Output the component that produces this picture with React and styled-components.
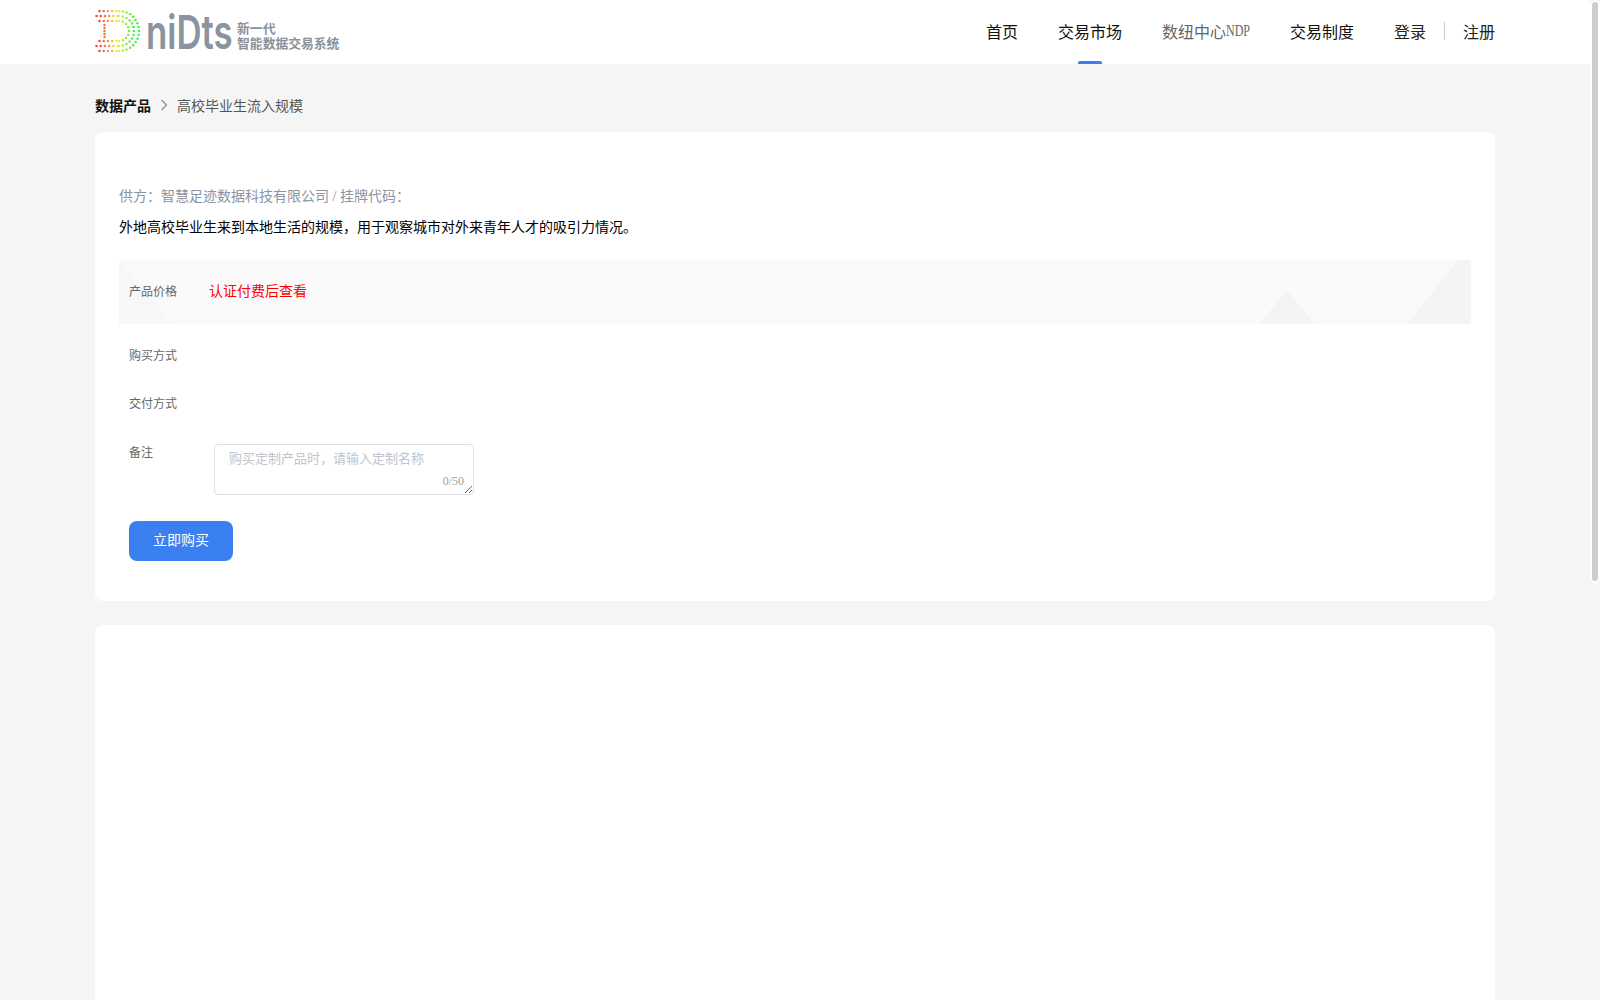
import React from "react";
import styled, { createGlobalStyle } from "styled-components";

const navItems = [
  { label: "首页" },
  { label: "交易市场", active: true },
  { label: "数纽中心", suffix: "NDP", muted: true },
  { label: "交易制度" },
];

const rings = [
  { r: 20, left: 99 },
  { r: 15, left: 96 },
  { r: 10, left: 99 },
];

function dotColor(x) {
  const hue = (345 + ((x - 95) / 45) * 155) % 360;
  return `hsl(${hue}, 85%, 60%)`;
}

function logoDots() {
  const dots = [];
  const cx = 24;
  const cy = 20;
  rings.forEach(({ r, left }) => {
    for (let x = left - 95 + 0.5; x < cx; x += 4.2) {
      dots.push([x, cy - r]);
      dots.push([x, cy + r]);
    }
    const steps = Math.round((Math.PI * r) / 4);
    for (let i = 0; i <= steps; i++) {
      const a = -Math.PI / 2 + (Math.PI * i) / steps;
      dots.push([cx + r * Math.cos(a), cy + r * Math.sin(a)]);
    }
  });
  for (let y = 14; y <= 26; y += 3) dots.push([9.5, y]);
  return dots;
}

function Logo() {
  return (
    <LogoWrap>
      <svg width="46" height="44" viewBox="0 0 46 44">
        {logoDots().map(([x, y], i) => (
          <circle key={i} cx={x} cy={y + 1} r="1.25" fill={dotColor(x + 95)} />
        ))}
      </svg>
      <LogoWord>niDts</LogoWord>
      <LogoText>
        <span>新一代</span>
        <span>智能数据交易系统</span>
      </LogoText>
    </LogoWrap>
  );
}

function PriceDecor() {
  return (
    <DecorSvg viewBox="0 0 1352 64" preserveAspectRatio="none">
      <polygon points="0,2 54,64 0,64" fill="#f7f7f7" />
      <polygon points="1140,64 1168,30 1196,64" fill="#f4f4f4" />
      <polygon points="1288,64 1339,0 1352,0 1352,64" fill="#f4f4f4" />
    </DecorSvg>
  );
}

export default function App() {
  return (
    <>
      <GlobalStyle />
      <Shell>
        <Page>
          <Header>
            <HeaderInner>
              <Logo />
              <Nav>
                {navItems.map((item) => (
                  <NavItem key={item.label} $active={item.active} $muted={item.muted}>
                    {item.label}
                    {item.suffix && <NavSuffix>{item.suffix}</NavSuffix>}
                  </NavItem>
                ))}
                <AuthLinks>
                  <AuthLink>登录</AuthLink>
                  <AuthDivider />
                  <AuthLink>注册</AuthLink>
                </AuthLinks>
              </Nav>
            </HeaderInner>
          </Header>
          <Main>
            <Breadcrumb>
              <strong>数据产品</strong>
              <Chevron viewBox="0 0 8 12">
                <path d="M1.5 1l5 5-5 5" fill="none" stroke="#888" strokeWidth="1.1" />
              </Chevron>
              <span>高校毕业生流入规模</span>
            </Breadcrumb>
            <Card>
              <Supplier>供方：智慧足迹数据科技有限公司 / 挂牌代码：</Supplier>
              <Desc>外地高校毕业生来到本地生活的规模，用于观察城市对外来青年人才的吸引力情况。</Desc>
              <PriceBand>
                <PriceDecor />
                <PriceLabel>产品价格</PriceLabel>
                <PriceValue>认证付费后查看</PriceValue>
              </PriceBand>
              <Row>
                <Label>购买方式</Label>
              </Row>
              <Row>
                <Label>交付方式</Label>
              </Row>
              <NoteRow>
                <Label>备注</Label>
                <NoteBox>
                  <NoteInput placeholder="购买定制产品时，请输入定制名称" maxLength={50} />
                  <NoteCount>0/50</NoteCount>
                </NoteBox>
              </NoteRow>
              <BuyButton type="button">立即购买</BuyButton>
            </Card>
            <DetailCard />
          </Main>
        </Page>
        <ScrollRail>
          <ScrollThumb />
        </ScrollRail>
      </Shell>
    </>
  );
}

const GlobalStyle = createGlobalStyle`
  html, body {
    height: 100%;
  }
  body {
    margin: 0;
    overflow: hidden;
    background: #f5f5f5;
    font-family: "Liberation Serif", "Noto Sans CJK SC", serif;
  }
`;

const Shell = styled.div`
  height: 100vh;
  display: flex;
`;

const Page = styled.div`
  flex: 1;
  min-width: 0;
  overflow-y: auto;
  scrollbar-width: none;
`;

const ScrollRail = styled.div`
  flex: none;
  width: 10px;
  background: #f5f5f5;
`;

const ScrollThumb = styled.div`
  height: 583px;
  box-sizing: border-box;
  border: 2px solid #fff;
  border-radius: 5px;
  background: #cdcdcd;
`;

const Header = styled.header`
  height: 64px;
  background: #fff;
`;

const HeaderInner = styled.div`
  width: 1400px;
  height: 100%;
  margin: 0 auto;
  display: flex;
  justify-content: space-between;
  align-items: center;
`;

const LogoWrap = styled.div`
  display: flex;
  align-items: center;
`;

const LogoWord = styled.span`
  display: inline-block;
  margin: 0 -26px 0 5px;
  transform: scaleX(0.74);
  transform-origin: left center;
  font-family: Inter, sans-serif;
  font-size: 47px;
  font-weight: 600;
  line-height: 44px;
  color: #8a93a0;
`;

const LogoText = styled.div`
  display: flex;
  flex-direction: column;
  padding-top: 6px;
  color: #8a929e;
  font-family: "Noto Sans CJK SC", sans-serif;
  font-size: 12.8px;
  font-weight: 700;
  line-height: 15px;
`;

const Nav = styled.nav`
  height: 100%;
  display: flex;
  align-items: center;
  gap: 40px;
`;

const NavItem = styled.a`
  position: relative;
  height: 100%;
  box-sizing: border-box;
  padding-bottom: 2px;
  display: flex;
  align-items: center;
  font-size: 16px;
  color: ${(p) => (p.$muted ? "#666" : "#111")};

  ${(p) =>
    p.$active &&
    `&::after {
      content: "";
      position: absolute;
      left: 50%;
      bottom: 0;
      width: 24px;
      height: 3px;
      margin-left: -12px;
      border-radius: 2px 2px 0 0;
      background: #3a80f0;
    }`}
`;

const NavSuffix = styled.span`
  display: inline-block;
  margin-right: -8px;
  transform: scaleX(0.75);
  transform-origin: left center;
`;

const AuthLinks = styled.div`
  display: flex;
  align-items: center;
  padding-bottom: 2px;
`;

const AuthLink = styled.a`
  font-size: 16px;
  color: #222;
`;

const AuthDivider = styled.i`
  width: 1px;
  height: 18px;
  margin: 0 18px;
  background: #ccc;
`;

const Main = styled.main`
  width: 1400px;
  margin: 0 auto;
  padding-bottom: 24px;
`;

const Breadcrumb = styled.div`
  height: 68px;
  box-sizing: border-box;
  padding-top: 14px;
  display: flex;
  align-items: center;
  font-size: 14px;
  color: #555;

  strong {
    color: #111;
    font-weight: 700;
  }
`;

const Chevron = styled.svg`
  width: 8px;
  height: 12px;
  margin: 0 9px;
`;

const Card = styled.section`
  padding: 54px 24px 40px;
  background: #fff;
  border-radius: 8px;
`;

const Supplier = styled.div`
  font-size: 14px;
  line-height: 22px;
  color: #8a94a3;
`;

const Desc = styled.div`
  margin-top: 9px;
  font-size: 14px;
  line-height: 22px;
  color: #000;
`;

const PriceBand = styled.div`
  position: relative;
  height: 64px;
  box-sizing: border-box;
  margin-top: 21px;
  padding: 0 0 2px 10px;
  display: flex;
  align-items: center;
  background: #fafafa;
`;

const DecorSvg = styled.svg`
  position: absolute;
  inset: 0;
  width: 100%;
  height: 100%;
`;

const PriceLabel = styled.span`
  position: relative;
  width: 80px;
  font-size: 12px;
  color: #666;
`;

const PriceValue = styled.span`
  position: relative;
  margin-bottom: 2px;
  font-size: 14px;
  color: #f00;
`;

const Row = styled.div`
  height: 48px;
  padding: 20px 0 0 10px;
  box-sizing: border-box;
`;

const Label = styled.span`
  display: block;
  width: 85px;
  flex: none;
  font-size: 12px;
  line-height: 24px;
  color: #666;
`;

const NoteRow = styled.div`
  display: flex;
  padding: 21px 0 0 10px;
`;

const NoteBox = styled.div`
  position: relative;
  margin-top: 3px;
  width: 260px;
  height: 51px;
`;

const NoteInput = styled.textarea`
  display: block;
  width: 100%;
  height: 100%;
  box-sizing: border-box;
  padding: 4px 14px;
  border: 1px solid #dcdfe6;
  border-radius: 4px;
  outline: none;
  font-family: inherit;
  font-size: 13px;
  line-height: 20px;
  color: #555;

  &::placeholder {
    color: #c0c4cc;
  }
`;

const NoteCount = styled.span`
  position: absolute;
  right: 10px;
  bottom: 6px;
  font-size: 12px;
  line-height: 16px;
  color: #a0a0a0;
`;

const BuyButton = styled.button`
  display: block;
  width: 104px;
  height: 40px;
  margin: 26px 0 0 10px;
  padding: 0 0 4px;
  border: 0;
  border-radius: 8px;
  background: #3a80f0;
  font-family: inherit;
  font-size: 14px;
  color: #fff;
  cursor: pointer;
`;

const DetailCard = styled.section`
  height: 1066px;
  margin-top: 24px;
  background: #fff;
  border-radius: 8px;
`;
